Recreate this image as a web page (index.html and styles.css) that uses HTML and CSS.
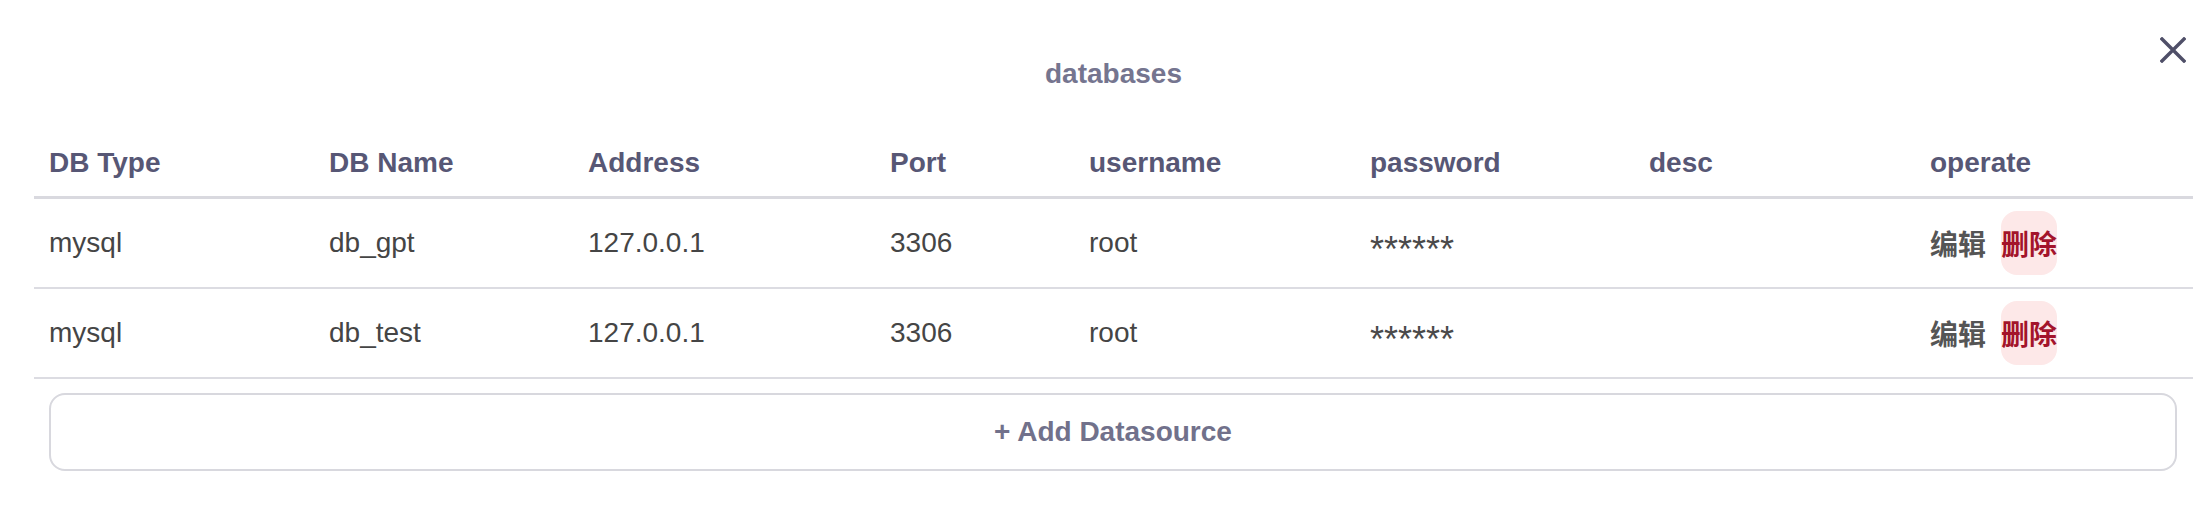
FILE: index.html
```html
<!DOCTYPE html>
<html lang="en">
<head>
<meta charset="utf-8">
<title>databases</title>
<link rel="stylesheet" href="styles.css">
</head>
<body>
<div class="modal">
  <button class="close" aria-label="Close">
    <svg viewBox="0 0 26 26" width="26" height="26"><path d="M2 2 L24 24 M24 2 L2 24" stroke="currentColor" stroke-width="3.4" stroke-linecap="square" fill="none"/></svg>
  </button>
  <div class="title">databases</div>
  <table class="db-table">
    <colgroup>
      <col class="c-type"><col class="c-name"><col class="c-addr"><col class="c-port">
      <col class="c-user"><col class="c-pass"><col class="c-desc"><col class="c-op">
    </colgroup>
    <thead>
      <tr><th>DB Type</th><th>DB Name</th><th>Address</th><th>Port</th><th>username</th><th>password</th><th>desc</th><th>operate</th></tr>
    </thead>
    <tbody>
      <tr>
        <td>mysql</td><td>db_gpt</td><td>127.0.0.1</td><td>3306</td><td>root</td><td><span class="mask">******</span></td><td></td>
        <td class="ops"><div class="ops-inner"><span class="edit">编辑</span><span class="del">删除</span></div></td>
      </tr>
      <tr>
        <td>mysql</td><td>db_test</td><td>127.0.0.1</td><td>3306</td><td>root</td><td><span class="mask">******</span></td><td></td>
        <td class="ops"><div class="ops-inner"><span class="edit">编辑</span><span class="del">删除</span></div></td>
      </tr>
    </tbody>
  </table>
  <div class="add-wrap"><button class="add-btn">+ Add Datasource</button></div>
</div>
</body>
</html>
```
FILE: styles.css
```css
html, body {
  margin: 0;
  background: #ffffff;
}
body {
  font-family: "Liberation Sans", "Noto Sans CJK SC", sans-serif;
  font-size: 28px;
}
.modal {
  position: relative;
  padding: 52px 19px 0 34px;
}
.close {
  position: absolute;
  top: 37px;
  right: 26px;
  width: 26px;
  height: 26px;
  padding: 0;
  border: 0;
  background: transparent;
  color: #4f4f68;
  display: flex;
}
.title {
  text-align: center;
  font-size: 28px;
  line-height: 44px;
  font-weight: 700;
  color: #75758f;
  margin-bottom: 34px;
}
.db-table {
  width: 2159px;
  border-collapse: separate;
  border-spacing: 0;
  table-layout: fixed;
}
.c-type { width: 280px; }
.c-name { width: 259px; }
.c-addr { width: 302px; }
.c-port { width: 199px; }
.c-user { width: 281px; }
.c-pass { width: 279px; }
.c-desc { width: 281px; }
.c-op { width: 278px; }
.db-table th {
  text-align: left;
  font-weight: 700;
  color: #575775;
  font-size: 28px;
  line-height: 44px;
  padding: 11px 15px;
  border-bottom: 3px solid #d9d9df;
  white-space: nowrap;
}
.db-table td {
  color: #454545;
  font-size: 28px;
  line-height: 44px;
  height: 44px;
  padding: 22px 15px;
  border-bottom: 2px solid #dcdce2;
  white-space: nowrap;
}
.mask {
  display: inline-block;
  font-size: 36px;
  line-height: 44px;
  height: 44px;
  vertical-align: top;
  transform: translateY(7px);
  color: #4a4a4a;
}
.db-table td.ops {
  padding-top: 12px;
  padding-bottom: 12px;
  height: 64px;
}
.ops-inner {
  display: flex;
  align-items: center;
  height: 64px;
}
.edit {
  font-family: "Noto Sans CJK SC", sans-serif;
  font-weight: 700;
  color: #555555;
  line-height: 64px;
}
.del {
  font-family: "Noto Sans CJK SC", sans-serif;
  font-weight: 700;
  color: #a3142b;
  background: #fde8e8;
  border-radius: 16px;
  height: 64px;
  line-height: 64px;
  margin-left: 15px;
}
.add-wrap {
  padding: 14px 16px 0 15px;
}
.add-btn {
  display: block;
  width: 100%;
  height: 78px;
  box-sizing: border-box;
  border: 2px solid #d8d8de;
  border-radius: 16px;
  background: #ffffff;
  font-family: "Liberation Sans", sans-serif;
  font-size: 28px;
  font-weight: 700;
  color: #71718b;
  padding: 0;
}
```
